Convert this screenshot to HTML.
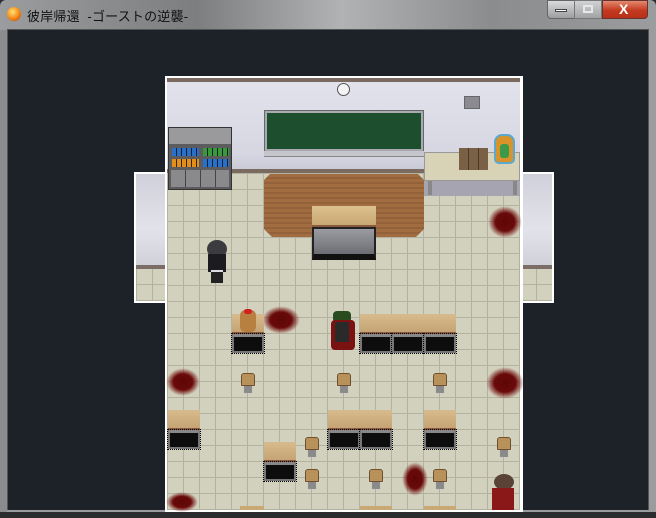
<!DOCTYPE html>
<html><head><meta charset="utf-8"><style>
*{margin:0;padding:0;box-sizing:border-box}
body{width:656px;height:518px;overflow:hidden;background:#2a2e35;position:relative;font-family:"Liberation Sans","Noto Sans CJK JP",sans-serif}
div{position:absolute}
.floor{background-color:#d2d1bd;background-image:repeating-linear-gradient(90deg,#b3b2a0 0 1px,transparent 1px 16px),repeating-linear-gradient(0deg,#b3b2a0 0 1px,transparent 1px 16px)}
.desk{width:32px;height:40px}
.desk .t{left:0;top:0;width:32px;height:20px;background:linear-gradient(#d8bb8c,#c4a474);border-bottom:2px solid #8a5a40}
.desk .b{left:0;top:20px;width:32px;height:19px;background:#0d0d0d;border:2px solid #777;border-top:3px solid #888;outline:1px dotted #000}
.chair{width:14px;height:20px}
.chair .s{left:0;top:0;width:14px;height:13px;background:#b8925a;border-radius:3px 3px 1px 1px;border:1px solid #6e5030}
.chair .l{left:3px;top:13px;width:8px;height:7px;background:#8a8a8a}
.blood{background:radial-gradient(ellipse,#5e0606 0,#6a0a0a 40%,rgba(110,10,10,0.5) 55%,rgba(110,10,10,0) 70%)}
</style></head><body>
<!-- title bar -->
<div style="left:0;top:0;width:656px;height:30px;background:linear-gradient(90deg,#9a9c9e 0,#7c7e80 30%,#b0b2b4 52%,#8a8c8e 75%,#9a9c9e 100%);border-radius:6px 6px 0 0"></div>
<div style="left:7px;top:7px;width:14px;height:14px;border-radius:50%;background:radial-gradient(circle at 40% 35%,#ffe070,#f08010 60%,#b03000)"></div>
<div style="left:27px;top:6px;font-size:13px;color:#111;white-space:nowrap;letter-spacing:0.2px">彼岸帰還 &nbsp;-ゴーストの逆襲-</div>
<div style="left:547px;top:0;width:28px;height:19px;background:linear-gradient(#d8dadc,#9c9ea0);border:1px solid #666;border-radius:0 0 0 4px"></div>
<div style="left:555px;top:9px;width:12px;height:3px;background:#fff;border:1px solid #444"></div>
<div style="left:574px;top:0;width:28px;height:19px;background:linear-gradient(#d0d2d4,#a0a2a4);border:1px solid #777"></div>
<div style="left:583px;top:5px;width:10px;height:8px;border:2px solid #e8e8e8"></div>
<div style="left:602px;top:0;width:46px;height:19px;background:linear-gradient(#e48a70,#c43a20 55%,#b83018);border:1px solid #633;border-radius:0 0 4px 0"></div>
<div style="left:619px;top:1px;color:#fff;font-size:14px;font-weight:bold">X</div>
<!-- frame -->
<div style="left:0;top:30px;width:656px;height:488px;background:linear-gradient(90deg,#8a8c8e,#9a9c9e)"></div>
<div style="left:7px;top:29px;width:642px;height:482px;background:#1d2128;border:1px solid #555"></div>
<div style="left:7px;top:510px;width:642px;height:2px;background:#9a9ca0"></div>
<div style="left:0;top:512px;width:656px;height:6px;background:#2a2c30"></div>
<!-- wings -->
<div style="left:134px;top:172px;width:420px;height:131px;background:#fff"></div>
<div class="floor" style="left:136px;top:174px;width:416px;height:127px"></div>
<div style="left:136px;top:174px;width:416px;height:92px;background:linear-gradient(#cfd0da,#e2e3ea 60%,#d0d0da)"></div>
<div style="left:136px;top:265px;width:416px;height:4px;background:#7a6e66"></div>
<!-- main room -->
<div style="left:165px;top:76px;width:358px;height:436px;background:#fff"></div>
<div class="floor" style="left:167px;top:172px;width:353px;height:338px"></div>
<div style="left:167px;top:78px;width:353px;height:94px;background:linear-gradient(#e2e3ec,#d6d7e2 80%,#c8c9d4)"></div>
<div style="left:167px;top:78px;width:353px;height:4px;background:#7a6a60"></div>
<div style="left:167px;top:169px;width:353px;height:4px;background:#7a6a60"></div>
<!-- clock, vent -->
<div style="left:337px;top:83px;width:13px;height:13px;border-radius:50%;background:#f4f4f4;border:1px solid #555"></div>
<div style="left:464px;top:96px;width:16px;height:13px;background:#8a8a90;border:1px solid #666"></div>
<!-- chalkboard -->
<div style="left:264px;top:110px;width:160px;height:42px;background:#a8aab0;border:1px solid #666"></div>
<div style="left:267px;top:113px;width:154px;height:36px;background:#1d4f2e"></div>
<div style="left:264px;top:151px;width:160px;height:6px;background:#c4c6cc;border-bottom:1px solid #888"></div>
<!-- shelf -->
<div style="left:168px;top:127px;width:64px;height:63px;background:#5c5c5e;border:1px solid #333"></div>
<div style="left:169px;top:128px;width:62px;height:16px;background:#9a9a9c"></div>
<div style="left:172px;top:148px;width:27px;height:8px;background:repeating-linear-gradient(90deg,#2a70c8 0 4px,#123 4px 5px)"></div>
<div style="left:203px;top:148px;width:26px;height:8px;background:repeating-linear-gradient(90deg,#3a9a3a 0 4px,#123 4px 5px)"></div>
<div style="left:172px;top:159px;width:27px;height:8px;background:repeating-linear-gradient(90deg,#e0901a 0 4px,#321 4px 5px)"></div>
<div style="left:203px;top:159px;width:26px;height:8px;background:repeating-linear-gradient(90deg,#2a70c8 0 4px,#123 4px 5px)"></div>
<div style="left:171px;top:170px;width:58px;height:17px;background:repeating-linear-gradient(90deg,#8a8a8c 0 14px,#444 14px 15px)"></div>
<!-- platform -->
<div style="left:264px;top:174px;width:160px;height:63px;background:repeating-linear-gradient(0deg,#a06c40 0 3px,#93623a 3px 5px);clip-path:polygon(6px 0,154px 0,160px 6px,160px 55px,152px 63px,8px 63px,0 55px,0 6px)"></div>
<div style="left:312px;top:206px;width:64px;height:21px;background:linear-gradient(#dcc08e,#c8a874);border-bottom:2px solid #8a5a40"></div>
<div style="left:312px;top:227px;width:64px;height:33px;background:linear-gradient(#9a9ca2,#6c6e74);border:2px solid #222;border-bottom:6px solid #111"></div>
<!-- side table -->
<div style="left:424px;top:180px;width:96px;height:16px;background:#a6a4b0"></div>
<div style="left:424px;top:152px;width:96px;height:29px;background:#d8d2b6;border:1px solid #999"></div>
<div style="left:428px;top:181px;width:4px;height:14px;background:#888"></div>
<div style="left:513px;top:181px;width:4px;height:14px;background:#888"></div>
<div style="left:459px;top:148px;width:29px;height:22px;background:repeating-linear-gradient(90deg,#7a6044 0 9px,#4a3828 9px 10px)"></div>
<div style="left:494px;top:134px;width:21px;height:30px;border-radius:8px 8px 5px 5px;background:#d8942a;border:2px solid #5aa8d0"></div>
<div style="left:500px;top:144px;width:9px;height:14px;background:#3a9a4a;border-radius:3px"></div>
<!-- character 1 -->
<div style="left:207px;top:240px;width:20px;height:18px;border-radius:50%;background:#3c3c40"></div>
<div style="left:208px;top:254px;width:18px;height:18px;background:#1c1c20"></div>
<div style="left:211px;top:270px;width:12px;height:13px;background:#222;border-top:2px solid #ddd"></div>
<!-- blood -->
<div class="blood" style="left:488px;top:206px;width:34px;height:32px"></div>
<div class="blood" style="left:262px;top:306px;width:38px;height:28px"></div>
<div class="blood" style="left:166px;top:368px;width:34px;height:28px"></div>
<div class="blood" style="left:486px;top:367px;width:38px;height:32px"></div>
<div class="blood" style="left:402px;top:462px;width:26px;height:34px"></div>
<div class="blood" style="left:166px;top:492px;width:32px;height:20px"></div>
<!-- desks row1 -->
<div class="desk" style="left:232px;top:314px"><div class="t"></div><div class="b"></div></div>
<div class="desk" style="left:360px;top:314px"><div class="t"></div><div class="b"></div></div>
<div class="desk" style="left:392px;top:314px"><div class="t"></div><div class="b"></div></div>
<div class="desk" style="left:424px;top:314px"><div class="t"></div><div class="b"></div></div>
<!-- teddy -->
<div style="left:240px;top:310px;width:16px;height:22px;background:#b88040;border-radius:5px"></div>
<div style="left:244px;top:309px;width:8px;height:5px;background:#d02020;border-radius:3px"></div>
<!-- ghost -->
<div style="left:333px;top:311px;width:18px;height:12px;background:#2a4a20;border-radius:4px"></div>
<div style="left:331px;top:320px;width:24px;height:30px;background:#7a1212;border-radius:4px"></div>
<div style="left:335px;top:322px;width:14px;height:20px;background:#2a2a2a"></div>
<!-- chairs -->
<div class="chair" style="left:241px;top:373px"><div class="s"></div><div class="l"></div></div>
<div class="chair" style="left:337px;top:373px"><div class="s"></div><div class="l"></div></div>
<div class="chair" style="left:433px;top:373px"><div class="s"></div><div class="l"></div></div>
<!-- row2 -->
<div class="desk" style="left:168px;top:410px"><div class="t"></div><div class="b"></div></div>
<div class="desk" style="left:328px;top:410px"><div class="t"></div><div class="b"></div></div>
<div class="desk" style="left:360px;top:410px"><div class="t"></div><div class="b"></div></div>
<div class="desk" style="left:424px;top:410px"><div class="t"></div><div class="b"></div></div>
<div class="chair" style="left:305px;top:437px"><div class="s"></div><div class="l"></div></div>
<div class="chair" style="left:497px;top:437px"><div class="s"></div><div class="l"></div></div>
<!-- row3 -->
<div class="desk" style="left:264px;top:442px"><div class="t"></div><div class="b"></div></div>
<div class="chair" style="left:305px;top:469px"><div class="s"></div><div class="l"></div></div>
<div class="chair" style="left:369px;top:469px"><div class="s"></div><div class="l"></div></div>
<div class="chair" style="left:433px;top:469px"><div class="s"></div><div class="l"></div></div>
<!-- bottom desk tops -->
<div style="left:240px;top:506px;width:24px;height:4px;background:#c8a874"></div>
<div style="left:360px;top:506px;width:32px;height:4px;background:#c8a874"></div>
<div style="left:424px;top:506px;width:32px;height:4px;background:#c8a874"></div>
<!-- girl -->
<div style="left:494px;top:474px;width:20px;height:16px;border-radius:50%;background:#5a4236"></div>
<div style="left:492px;top:488px;width:22px;height:22px;background:#8a1818"></div>
</body></html>
